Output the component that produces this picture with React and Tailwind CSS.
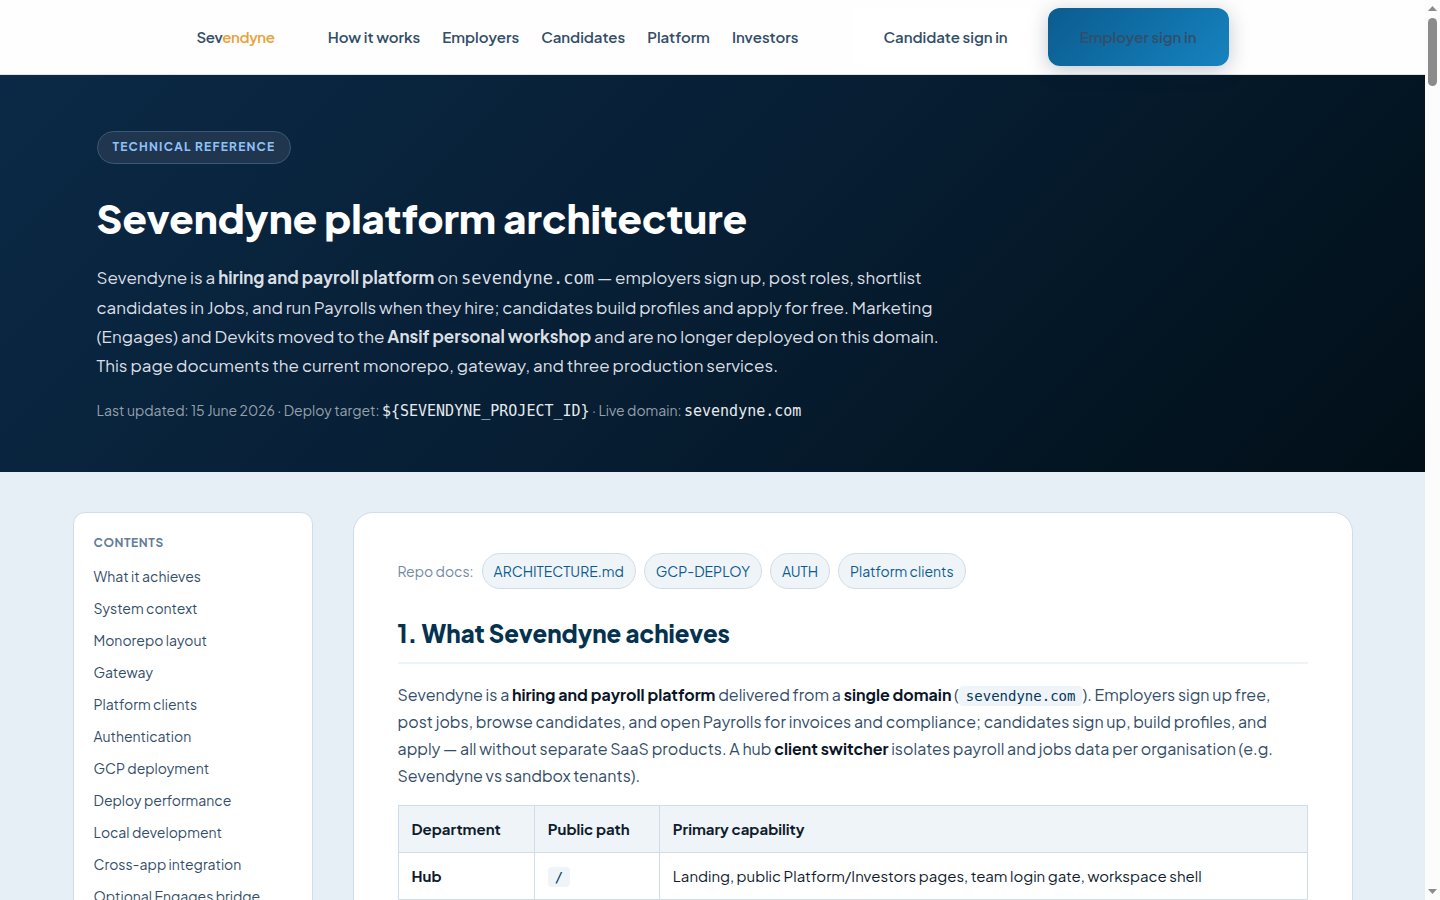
import React from "react";

const NAV_LINKS = [
    "How it works",
    "Employers",
    "Candidates",
    "Platform",
    "Investors",
];

const CONTENTS = [
    "What it achieves",
    "System context",
    "Monorepo layout",
    "Gateway",
    "Platform clients",
    "Authentication",
    "GCP deployment",
    "Deploy performance",
    "Local development",
    "Cross-app integration",
    "Optional Engages bridge",
];

const REPO_DOCS = ["ARCHITECTURE.md", "GCP-DEPLOY", "AUTH", "Platform clients"];

const DEPARTMENTS = [
    {
        name: "Hub",
        path: "/",
        capability:
            "Landing, public Platform/Investors pages, team login gate, workspace shell",
    },
];

function Header() {
    return (
        <header className="relative z-10 border-b border-[#dbe3eb] bg-[#fefefe]">
            <div className="mx-auto flex max-w-[1032px] items-center justify-between py-2 text-[15px] font-semibold text-[#334e68]">
                <a href="#top" className="tracking-tight">
                    Sev<span className="text-[#e9a23b]">endyne</span>
                </a>
                <nav className="flex gap-[22px]">
                    {NAV_LINKS.map((label) => (
                        <a key={label} href="#top">
                            {label}
                        </a>
                    ))}
                </nav>
                <div className="flex gap-2">
                    <a
                        href="#top"
                        className="rounded-xl bg-white px-8 py-[18px] leading-[22px]"
                    >
                        Candidate sign in
                    </a>
                    <a
                        href="#top"
                        className="rounded-xl bg-linear-135 from-[#0b5c8f] to-[#1683c0] px-8 py-[18px] leading-[22px] shadow-[0_4px_20px_rgba(10,37,64,0.25)]"
                    >
                        Employer sign in
                    </a>
                </div>
            </div>
        </header>
    );
}

function Hero() {
    return (
        <section className="bg-linear-135 from-[#0b2946] via-[#071e33] to-[#020f18]">
            <div className="mx-auto max-w-[1280px] px-6 pt-14 pb-12">
                <span className="inline-block rounded-full border border-[#3b5878] bg-[#20364e] px-[15px] pt-[5px] pb-[6px] text-xs leading-5 font-bold tracking-widest text-[#8fc1fa] uppercase">
                    Technical reference
                </span>
                <h1 className="mt-7 text-[40px] leading-[51px] font-extrabold text-white">
                    Sevendyne platform architecture
                </h1>
                <p className="mt-5 max-w-[860px] text-[17px] leading-[29px] text-[#dadfe4]">
                    Sevendyne is a{" "}
                    <strong className="font-bold">
                        hiring and payroll platform
                    </strong>{" "}
                    on{" "}
                    <code className="font-['DejaVu_Sans_Mono',monospace]">
                        sevendyne.com
                    </code>{" "}
                    — employers sign up, post roles, shortlist candidates in
                    Jobs, and run Payrolls when they hire; candidates build
                    profiles and apply for free. Marketing (Engages) and Devkits
                    moved to the{" "}
                    <strong className="font-bold">
                        Ansif personal workshop
                    </strong>{" "}
                    and are no longer deployed on this domain. This page
                    documents the current monorepo, gateway, and three
                    production services.
                </p>
                <p className="mt-[18px] text-sm leading-[25px] text-[#95a0ac]">
                    Last updated: 15 June 2026 · Deploy target:{" "}
                    <code className="font-['DejaVu_Sans_Mono',monospace] text-[15px] text-[#e6eaee]">
                        {"${SEVENDYNE_PROJECT_ID}"}
                    </code>{" "}
                    · Live domain:{" "}
                    <code className="font-['DejaVu_Sans_Mono',monospace] text-[15px] text-[#e6eaee]">
                        sevendyne.com
                    </code>
                </p>
            </div>
        </section>
    );
}

function Sidebar() {
    return (
        <aside className="w-60 shrink-0 rounded-xl border border-[#d0dde9] bg-white p-5">
            <h2 className="text-xs leading-5 font-bold tracking-wider text-[#627d98] uppercase">
                Contents
            </h2>
            <ul className="mt-[13px] flex flex-col gap-3 text-sm leading-5 text-[#334e68]">
                {CONTENTS.map((label) => (
                    <li key={label}>
                        <a href="#top">{label}</a>
                    </li>
                ))}
            </ul>
        </aside>
    );
}

function Code({ children }) {
    return (
        <code className="rounded bg-[#eff4f8] px-[7px] py-[2px] font-['DejaVu_Sans_Mono',monospace] text-sm text-[#05385a]">
            {children}
        </code>
    );
}

function DepartmentTable() {
    return (
        <table className="mt-4 w-full border-collapse text-left text-[15px] leading-[22px] text-[#0f1c2e]">
            <thead className="bg-[#eff4f8]">
                <tr>
                    <th className="w-[15%] border border-[#d0dde9] px-[13px] py-3 font-bold">
                        Department
                    </th>
                    <th className="w-[125px] border border-[#d0dde9] px-[13px] py-3 font-bold">
                        Public path
                    </th>
                    <th className="border border-[#d0dde9] px-[13px] py-3 font-bold">
                        Primary capability
                    </th>
                </tr>
            </thead>
            <tbody>
                {DEPARTMENTS.map((row) => (
                    <tr key={row.name}>
                        <td className="border border-[#d0dde9] px-[13px] py-3 font-bold">
                            {row.name}
                        </td>
                        <td className="border border-[#d0dde9] px-[13px] py-3">
                            <Code>{row.path}</Code>
                        </td>
                        <td className="border border-[#d0dde9] px-[13px] py-3">
                            {row.capability}
                        </td>
                    </tr>
                ))}
            </tbody>
        </table>
    );
}

function Article() {
    return (
        <main className="min-w-0 flex-1 rounded-[20px] border border-[#d0dde9] bg-white px-11 py-10">
            <div className="flex items-center gap-2 text-sm">
                <span className="text-[#738aa3]">Repo docs:</span>
                {REPO_DOCS.map((label) => (
                    <a
                        key={label}
                        href="#top"
                        className="rounded-full border border-[#d0dde9] bg-[#eff4f8] px-[11px] py-[6px] leading-[22px] text-[#0b5c8f]"
                    >
                        {label}
                    </a>
                ))}
            </div>
            <h2 className="mt-[27px] border-b-2 border-[#eff4f8] pb-3 text-2xl leading-[34px] font-extrabold text-[#05324f]">
                1. What Sevendyne achieves
            </h2>
            <p className="mt-[17px] text-base leading-[27px] text-[#334e68]">
                Sevendyne is a{" "}
                <strong className="font-bold text-[#0a1628]">
                    hiring and payroll platform
                </strong>{" "}
                delivered from a{" "}
                <strong className="font-bold text-[#0a1628]">
                    single domain
                </strong>{" "}
                (<Code>sevendyne.com</Code>). Employers sign up free, post jobs,
                browse candidates, and open Payrolls for invoices and
                compliance; candidates sign up, build profiles, and apply — all
                without separate SaaS products. A hub{" "}
                <strong className="font-bold text-[#0a1628]">
                    client switcher
                </strong>{" "}
                isolates payroll and jobs data per organisation (e.g. Sevendyne
                vs sandbox tenants).
            </p>
            <DepartmentTable />
        </main>
    );
}

function ScrollTrack() {
    return (
        <div className="flex w-[15px] shrink-0 flex-col items-center bg-[#fcfcfc] py-[6px]">
            <svg width="9" height="5" viewBox="0 0 9 5" fill="#8b8b8b">
                <path d="M4.5 0L9 5H0z" />
            </svg>
            <div className="mt-[7px] h-[68px] w-[9px] rounded-full bg-[#8b8b8b]" />
            <svg
                className="mt-auto"
                width="9"
                height="5"
                viewBox="0 0 9 5"
                fill="#8b8b8b"
            >
                <path d="M0 0h9L4.5 5z" />
            </svg>
        </div>
    );
}

function App() {
    return (
        <div className="flex h-screen overflow-hidden bg-[#e6eef6] font-['Plus_Jakarta_Sans',Inter,sans-serif]">
            <div id="top" className="min-w-0 flex-1 overflow-hidden">
                <Header />
                <Hero />
                <div className="mx-auto flex max-w-[1280px] gap-10 py-10">
                    <Sidebar />
                    <Article />
                </div>
            </div>
            <ScrollTrack />
        </div>
    );
}

export default App;
